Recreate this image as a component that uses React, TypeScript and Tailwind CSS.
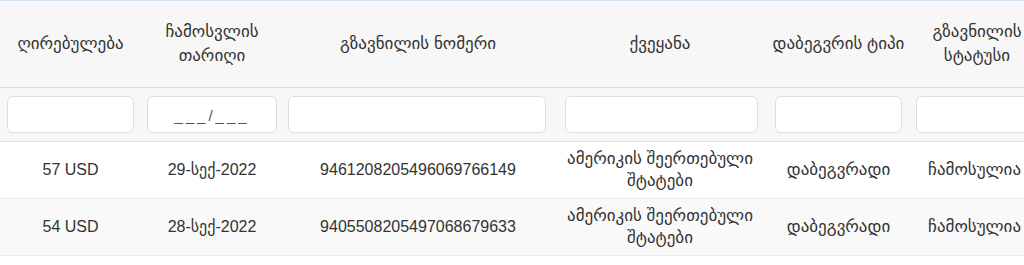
import React from "react";

const cols = [
  { w: "w-[141px]", pad: "pl-[7px] pr-[7px]" },
  { w: "w-[142px]", pad: "pl-[6px] pr-[6px]" },
  { w: "w-[270px]", pad: "pl-[5px] pr-[7px]" },
  { w: "w-[214px]", pad: "pl-[12px] pr-[9px]" },
  { w: "w-[143px]", pad: "pl-[8px] pr-[8px]" },
  { w: "w-[140px]", pad: "pl-[6px] pr-[0px]" },
];

const headers = [
  "ღირებულება",
  "ჩამოსვლის თარიღი",
  "გზავნილის ნომერი",
  "ქვეყანა",
  "დაბეგვრის ტიპი",
  "გზავნილის სტატუსი",
];

const rows = [
  ["57 USD", "29-სექ-2022", "9461208205496069766149", "ამერიკის შეერთებული შტატები", "დაბეგვრადი", "ჩამოსულია"],
  ["54 USD", "28-სექ-2022", "9405508205497068679633", "ამერიკის შეერთებული შტატები", "დაბეგვრადი", "ჩამოსულია"],
];

export default function App() {
  return (
    <div
      className="w-[1024px] h-[265px] overflow-hidden bg-white text-[#333]"
      style={{ fontFamily: '"Liberation Sans", "DejaVu Sans", Arial, sans-serif' }}
    >
      <div className="h-[1px] bg-[#d6e3f3]" />
      <div className="flex h-[87px] bg-[#f7f7f7] border-b border-[#dcdcdc] w-[1100px]">
        {headers.map((h, i) => (
          <div
            key={i}
            className={`${i === 5 ? "w-[134px] px-0" : cols[i].w} shrink-0 flex items-center justify-center text-center ${i === 4 ? "px-0 whitespace-nowrap" : i === 5 ? "" : "px-2"} text-[17px] leading-[24px]`}
          >
            {h}
          </div>
        ))}
      </div>
      <div className="flex h-[54px] bg-[#f7f7f7] border-b border-[#e2e2e2] w-[1100px] items-center">
        {cols.map((c, i) => (
          <div key={i} className={`${c.w} ${c.pad} shrink-0`}>
            <div className="h-[37px] w-full bg-white border border-[#dedede] rounded-[6px] flex items-center justify-center pt-[4px] text-[#555] text-[15px] tracking-[3px]">
              {i === 1 ? "___/___" : ""}
            </div>
          </div>
        ))}
      </div>
      {rows.map((r, ri) => (
        <div
          key={ri}
          className={`flex h-[57px] w-[1100px] border-b border-[#ececec] ${ri === 1 ? "bg-[#f9f9f9]" : "bg-white"}`}
        >
          {r.map((cell, i) => (
            <div
              key={i}
              className={`${cols[i].w} shrink-0 flex items-center ${i === 5 ? "justify-start pl-[18px]" : "justify-center px-1"} text-center text-[16px] leading-[22px]`}
            >
              {i === 3 ? (
                <span className="w-[200px] text-[17px]">{cell}</span>
              ) : (
                <span className={`whitespace-nowrap ${i >= 4 ? "text-[17px]" : ""}`}>{cell}</span>
              )}
            </div>
          ))}
        </div>
      ))}
    </div>
  );
}
